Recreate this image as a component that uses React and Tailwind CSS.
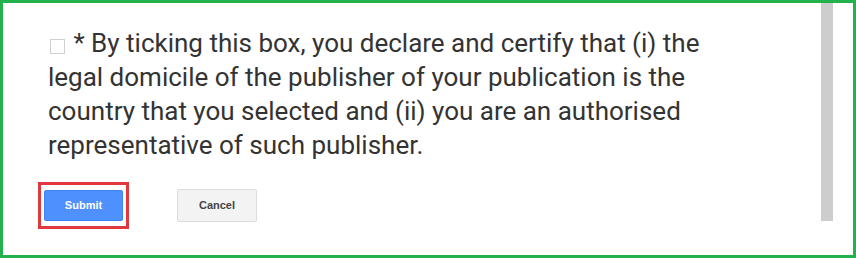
import React from 'react';

export default function App() {
  return (
    <div className="w-[856px] h-[258px] border-[3px] border-[#22b14c] bg-white flex font-['Roboto',sans-serif]">
      <div className="flex-1 pl-[45px] pt-[23px]">
        <p className="text-[26px] leading-[34px] text-[#333] w-[665px]">
          <span className="inline-block w-[15px] h-[15px] border border-[#d0d0d0] bg-white align-[-2px] ml-[2px] mr-[2px]"></span>{' '}
          * By ticking this box, you declare and certify that (i) the legal domicile of the publisher of your publication is the country that you selected and (ii) you are an authorised representative of such publisher.
        </p>

        <div className="flex items-center mt-[20px] ml-[-10px] font-['Liberation_Sans',Arial,sans-serif]">
          <div className="border-[3px] border-[#e0383e] px-[3px] py-[5px]">
            <button
              type="button"
              className="w-[79px] h-[31px] rounded-[2px] bg-[#4d90fe] border border-[#3c83f5] text-white text-[11px] font-bold"
            >
              Submit
            </button>
          </div>
          <button
            type="button"
            className="ml-[48px] w-[80px] h-[33px] rounded-[2px] bg-[#f3f3f3] border border-[#dcdcdc] text-[#444] text-[11px] font-bold"
          >
            Cancel
          </button>
        </div>
      </div>

      <div className="w-[12px] mr-[20px]">
        <div className="h-[218px] bg-[#cdcdcd]"></div>
      </div>
    </div>
  );
}
